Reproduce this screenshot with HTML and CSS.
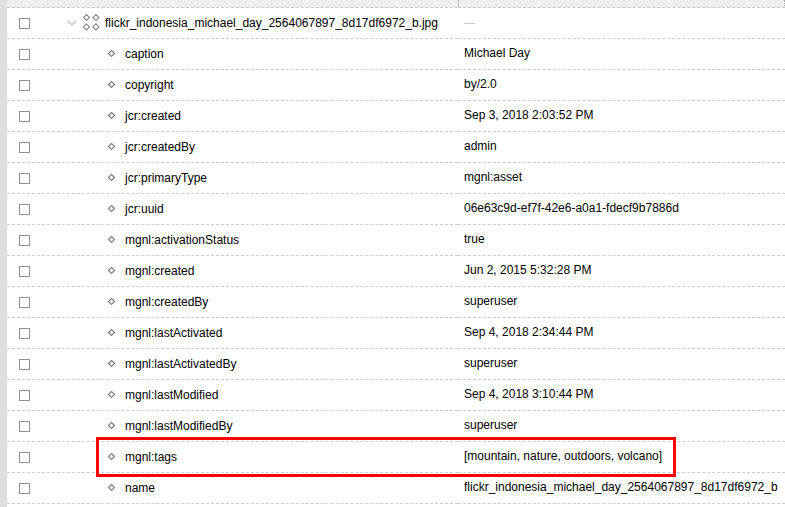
FILE: index.html
```html
<!DOCTYPE html>
<html lang="en">
<head>
<meta charset="utf-8">
<title>Asset properties</title>
<link rel="stylesheet" href="styles.css">
</head>
<body>
<svg class="defs" width="0" height="0" aria-hidden="true">
  <symbol id="diamond" viewBox="0 0 8 8"><path d="M4 1 7 4 4 7 1 4Z"/></symbol>
</svg>
<main class="browser">
  <div class="header"><span></span><span class="column"></span></div>
  <div class="rows" id="rows">
    <div class="row parent">
      <div class="tree"><span class="check"></span>
        <svg class="arrow" width="10" height="6" viewBox="0 0 10 6"><path d="M.8 .8 5 4.9 9.2 .8"/></svg>
        <svg class="node" width="17" height="17" viewBox="0 0 17 17"><use href="#diamond" x="-.5" y="-.5" width="8" height="8"/><use href="#diamond" x="8.9" y="-.5" width="8" height="8"/><use href="#diamond" x="-.5" y="8.9" width="8" height="8"/><use href="#diamond" x="8.9" y="8.9" width="8" height="8"/></svg>
        <span class="name">flickr_indonesia_michael_day_2564067897_8d17df6972_b.jpg</span>
      </div>
      <div class="value"><span class="empty"></span></div>
    </div>
  </div>
</main>
<script src="rows.js"></script>
</body>
</html>
```
FILE: styles.css
```css
* { box-sizing: border-box; }
body {
  margin: 0;
  height: 507px;
  overflow: hidden;
  background: #fff;
  color: #000;
  font: 12px/16px "Liberation Sans", Arial, sans-serif;
}
.defs { position: absolute; }
.browser { height: 507px; border-left: 7px solid #dfdfdf; overflow: hidden; }
.header, .row { display: grid; grid-template-columns: 451px 327px; }
.header { height: 8px; background: #eee; }
.header > span { border-bottom: 1px dashed #ccc; }
.header .column { border-left: 1px dotted #aaa; border-right: 1px dotted #aaa; }
.row { height: 31px; }
.tree, .value { display: flex; border-bottom: 1px dashed #ccc; white-space: nowrap; }
.tree { padding: 7px 0 0 12px; }
.value { padding: 6px 0 0 6px; }
.check { width: 11px; height: 11px; margin-top: 3px; border: 1px solid #919191; flex: none; }
.name { margin-left: 10px; }
.diamond { width: 7px; height: 7px; margin: 4px 0 0 78px; }
.diamond, .node { fill: none; stroke: #7d7f82; stroke-width: 1.2; flex: none; overflow: visible; }
.arrow { margin: 5px 0 0 37px; fill: none; stroke: #bbb; stroke-width: 1.2; }
.node { margin: -1px 0 0 6px; stroke: #8b898c; }
.parent .name { margin-left: 5px; }
.empty { width: 11px; height: 1px; margin-top: 9px; background: #ccc; }
.highlight { position: absolute; left: 96px; top: 437px; width: 580px; height: 40px; border: 3px solid #f00; }
```
FILE: rows.js
```js
const properties = [
  ["caption", "Michael Day"],
  ["copyright", "by/2.0"],
  ["jcr:created", "Sep 3, 2018 2:03:52 PM"],
  ["jcr:createdBy", "admin"],
  ["jcr:primaryType", "mgnl:asset"],
  ["jcr:uuid", "06e63c9d-ef7f-42e6-a0a1-fdecf9b7886d"],
  ["mgnl:activationStatus", "true"],
  ["mgnl:created", "Jun 2, 2015 5:32:28 PM"],
  ["mgnl:createdBy", "superuser"],
  ["mgnl:lastActivated", "Sep 4, 2018 2:34:44 PM"],
  ["mgnl:lastActivatedBy", "superuser"],
  ["mgnl:lastModified", "Sep 4, 2018 3:10:44 PM"],
  ["mgnl:lastModifiedBy", "superuser"],
  ["mgnl:tags", "[mountain, nature, outdoors, volcano]"],
  ["name", "flickr_indonesia_michael_day_2564067897_8d17df6972_b"]
];

document.getElementById("rows").insertAdjacentHTML("beforeend", properties.map(([name, value]) => `
  <div class="row">
    <div class="tree"><span class="check"></span><svg class="diamond"><use href="#diamond" x="-.5" y="-.5" width="8" height="8"/></svg><span class="name">${name}</span></div>
    <div class="value"><span>${value}</span></div>
  </div>`).join("") + '<div class="highlight"></div>');
```
